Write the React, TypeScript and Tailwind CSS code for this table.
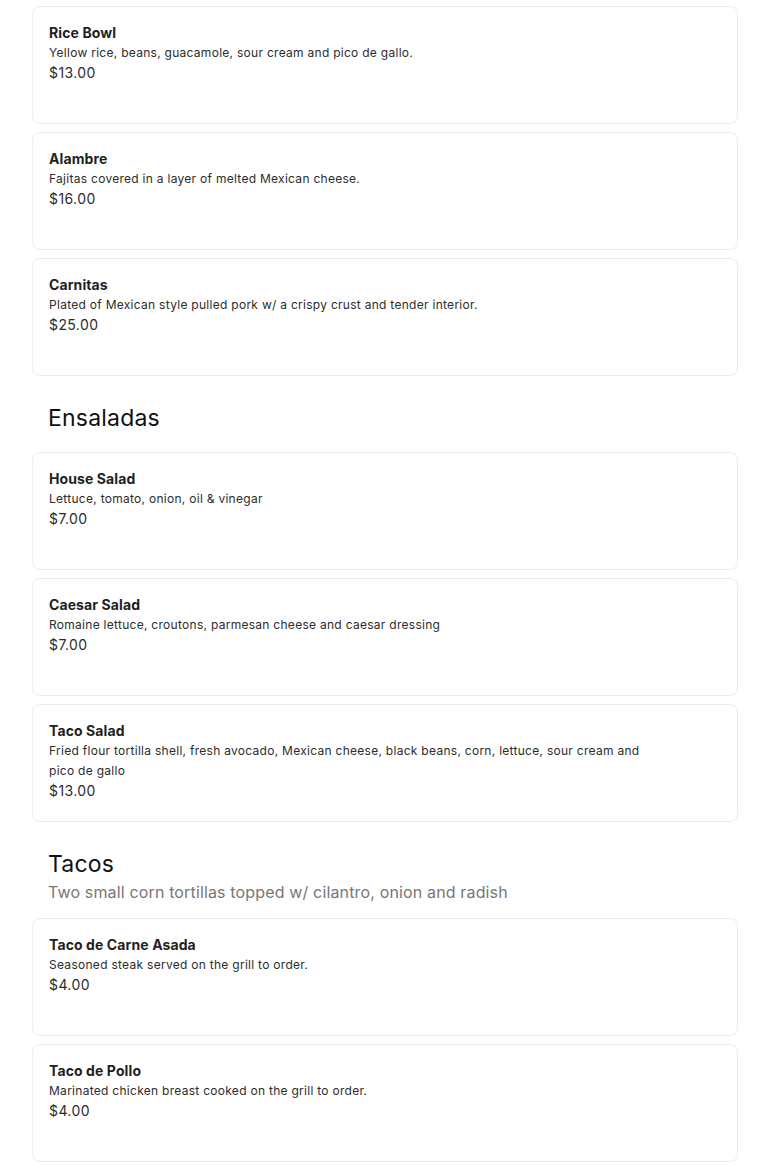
const ricebowls = [
  {
    name: 'Rice Bowl',
    description: 'Yellow rice, beans, guacamole, sour cream and pico de gallo.',
    price: '$13.00',
  },
  {
    name: 'Alambre',
    description: 'Fajitas covered in a layer of melted Mexican cheese.',
    price: '$16.00',
  },
  {
    name: 'Carnitas',
    description: 'Plated of Mexican style pulled pork w/ a crispy crust and tender interior.',
    price: '$25.00',
  },
];

const ensaladas = [
  { name: 'House Salad', description: 'Lettuce, tomato, onion, oil & vinegar', price: '$7.00' },
  {
    name: 'Caesar Salad',
    description: 'Romaine lettuce, croutons, parmesan cheese and caesar dressing',
    price: '$7.00',
  },
  {
    name: 'Taco Salad',
    description:
      'Fried flour tortilla shell, fresh avocado, Mexican cheese, black beans, corn, lettuce, sour cream and pico de gallo',
    price: '$13.00',
  },
];

const tacos = [
  { name: 'Taco de Carne Asada', description: 'Seasoned steak served on the grill to order.', price: '$4.00' },
  { name: 'Taco de Pollo', description: 'Marinated chicken breast cooked on the grill to order.', price: '$4.00' },
];

type Item = { name: string; description: string; price: string };

function MenuCard({ item }: { item: Item }) {
  return (
    <div className="min-h-[118px] rounded-lg border border-[#ececec] bg-white px-4 pt-4 pb-4">
      <h3 className="text-[14px] font-bold leading-5 tracking-[0.1px] text-[#1f1f1f]">{item.name}</h3>
      <p className="max-w-[600px] text-[12px] leading-5 tracking-[0.28px] text-[#2c2c2c]">{item.description}</p>
      <p className="text-[14px] leading-5 tracking-[0.4px] text-[#2c2c2c]">{item.price}</p>
    </div>
  );
}

function SectionHeading({ title, subtitle }: { title: string; subtitle?: string }) {
  return (
    <div className="px-4 pt-[18px] pb-[10px]">
      <h2 className="text-[23px] leading-8 tracking-[0.2px] text-[#111]">{title}</h2>
      {subtitle && <p className="-mb-[2px] mt-[2px] text-[16px] leading-5 tracking-[0.15px] text-[#777]">{subtitle}</p>}
    </div>
  );
}

export default function App() {
  return (
    <div
      className="min-h-screen bg-white px-8 pt-[6px]"
      style={{ fontFamily: 'Inter, "Noto Sans", sans-serif' }}
    >
      <div className="flex w-[706px] flex-col gap-2">
        {ricebowls.map((item) => (
          <MenuCard key={item.name} item={item} />
        ))}

        <SectionHeading title="Ensaladas" />

        {ensaladas.map((item) => (
          <MenuCard key={item.name} item={item} />
        ))}

        <SectionHeading title="Tacos" subtitle="Two small corn tortillas topped w/ cilantro, onion and radish" />

        {tacos.map((item) => (
          <MenuCard key={item.name} item={item} />
        ))}
      </div>
    </div>
  );
}
